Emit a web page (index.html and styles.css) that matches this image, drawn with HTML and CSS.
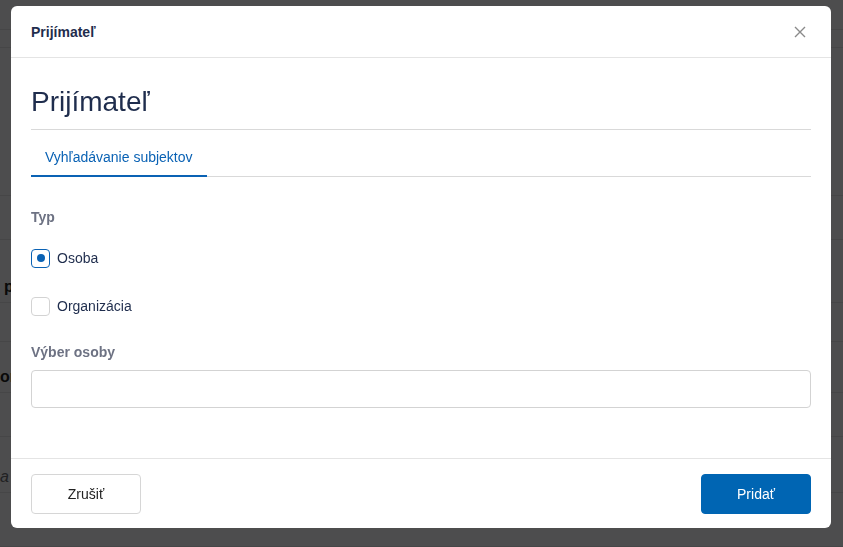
FILE: index.html
```html
<!DOCTYPE html>
<html lang="sk">
<head>
  <meta charset="UTF-8">
  <title>Prijímateľ</title>
  <link rel="stylesheet" href="styles.css">
</head>
<body>

<!-- stránka pod dialógom -->
<div class="page">
  <div class="page-row"></div>
  <div class="page-row"></div>
  <div class="page-row"></div>
  <div class="page-row"></div>
  <div class="page-row"><span class="page-cell bold indent">pr</span></div>
  <div class="page-row"></div>
  <div class="page-row"><span class="page-cell bold">or</span></div>
  <div class="page-row"></div>
  <div class="page-row"><span class="page-cell muted">a /</span></div>
  <div class="page-row"></div>
</div>

<div class="overlay">
  <div class="modal">
    <div class="modal-header">
      <span class="modal-title">Prijímateľ</span>
      <button class="btn-close" type="button" aria-label="Zavrieť">
        <svg width="12" height="12" viewBox="0 0 12 12">
          <path d="M1 1 L11 11 M11 1 L1 11" stroke="#8a8a8a" stroke-width="1.4" fill="none"/>
        </svg>
      </button>
    </div>

    <div class="modal-body">
      <h1 class="h1">Prijímateľ</h1>

      <div class="tabs">
        <div class="tab active">Vyhľadávanie subjektov</div>
      </div>

      <div class="label label-typ">Typ</div>

      <label class="choice">
        <span class="choice-box checked"><span class="dot"></span></span>
        <span>Osoba</span>
      </label>
      <label class="choice">
        <span class="choice-box"></span>
        <span>Organizácia</span>
      </label>

      <div class="label label-field">Výber osoby</div>
      <input class="input" type="text">
    </div>

    <div class="modal-footer">
      <button class="btn" type="button">Zrušiť</button>
      <button class="btn btn-primary" type="button">Pridať</button>
    </div>
  </div>
</div>

</body>
</html>
```

FILE: styles.css
```css
body {
  margin: 0;
  font-family: 'Liberation Sans', Arial, sans-serif;
  font-size: 14px;
  color: #1f2d4d;
}

/* stránka v pozadí */
.page {
  height: 547px;
  display: grid;
  grid-template-rows: 30px 18px 148px 44px 63px 39px 51px 44px 56px 1fr;
  background: #f8f8fb;
}
.page-row {
  border-bottom: 1px solid #e2e2e6;
  display: flex;
  align-items: flex-end;
  padding-bottom: 6px;
  box-sizing: border-box;
}
.page-cell {
  font-size: 16px;
  color: #222;
}
.bold {
  font-weight: 700;
}
.indent {
  padding-left: 4px;
}
.muted {
  color: #6a6a70;
  font-style: italic;
}

.overlay {
  position: fixed;
  inset: 0;
  background: rgba(0, 0, 0, 0.69);
  display: flex;
  align-items: flex-start;
  padding: 6px 0 0 11px;
}

.modal {
  width: 820px;
  background: #fff;
  border-radius: 6px;
  display: flex;
  flex-direction: column;
}

.modal-header {
  height: 51px;
  border-bottom: 1px solid #e4e4e4;
  padding: 0 20px;
  display: flex;
  align-items: center;
  justify-content: space-between;
}
.modal-title {
  font-size: 14px;
  font-weight: 700;
  color: #1f2d4d;
}
.btn-close {
  border: 0;
  background: none;
  padding: 0;
  width: 12px;
  height: 12px;
  display: flex;
  margin-right: 5px;
}

.modal-body {
  padding: 27px 20px 50px 20px;
}

.h1 {
  margin: 0;
  font-size: 28px;
  font-weight: 400;
  line-height: 34px;
  padding-bottom: 10px;
  border-bottom: 1px solid #d9d9d9;
  color: #1f2d4d;
}

.tabs {
  margin-top: 9px;
  display: flex;
  border-bottom: 1px solid #d9d9d9;
}
.tab {
  padding: 8px 14px;
  line-height: 20px;
  color: #0a62b4;
}
.tab.active {
  border-bottom: 2px solid #0a62b4;
  margin-bottom: -1px;
}

.label {
  font-weight: 700;
  color: #6d7283;
  line-height: 20px;
}
.label-typ {
  margin-top: 30px;
}
.label-field {
  margin-top: 26px;
}

.choice {
  display: flex;
  align-items: center;
  gap: 7px;
  height: 20px;
  margin-top: 21px;
  color: #1f2d4d;
}
.choice + .choice {
  margin-top: 28px;
}
.choice-box {
  width: 17px;
  height: 17px;
  border: 1px solid #d3d3d3;
  border-radius: 4px;
  display: flex;
  align-items: center;
  justify-content: center;
}
.choice-box.checked {
  border-color: #0a62b4;
}
.dot {
  width: 8px;
  height: 8px;
  border-radius: 50%;
  background: #0a62b4;
}

.input {
  display: block;
  margin-top: 8px;
  width: 100%;
  height: 38px;
  box-sizing: border-box;
  border: 1px solid #d3d3d3;
  border-radius: 4px;
}

.modal-footer {
  border-top: 1px solid #e4e4e4;
  padding: 15px 20px 14px 20px;
  display: flex;
  justify-content: space-between;
}
.btn {
  width: 110px;
  height: 40px;
  border: 1px solid #d6d6d6;
  border-radius: 4px;
  background: #fff;
  font-family: 'Liberation Sans', Arial, sans-serif;
  font-size: 14px;
  color: #222;
}
.btn-primary {
  background: #0065b3;
  border-color: #0065b3;
  color: #fff;
}
```
